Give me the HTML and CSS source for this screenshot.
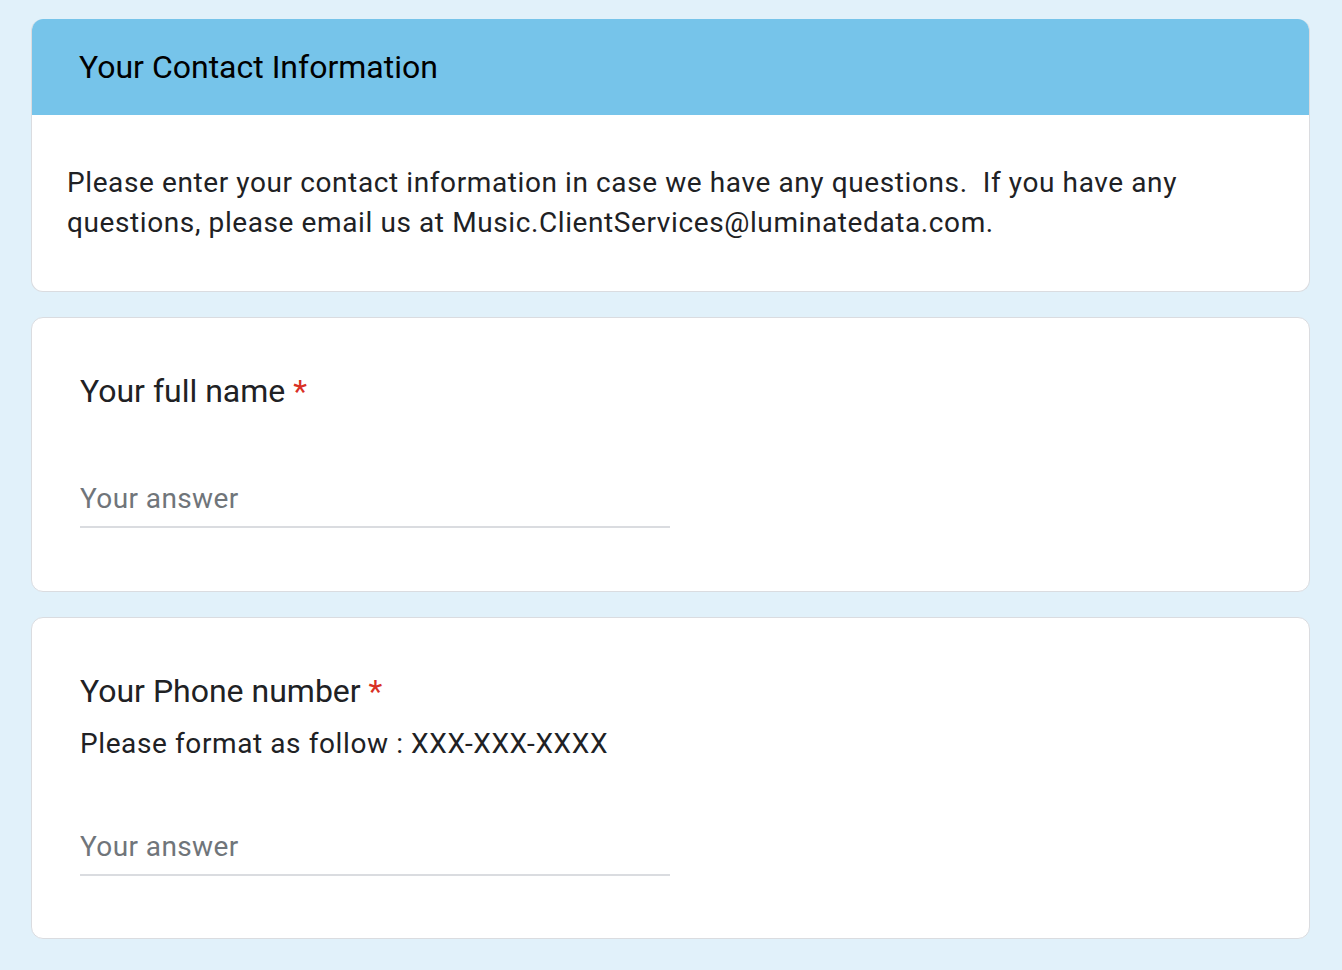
FILE: index.html
```html
<!DOCTYPE html>
<html lang="en">
<head>
  <meta charset="UTF-8">
  <title>Your Contact Information</title>
  <meta name="viewport" content="width=device-width, initial-scale=1.0">
  <link rel="stylesheet" href="styles.css">
</head>
<body>

<main class="form">

  <section class="card section-card">
    <header class="section-head">
      <h2>Your Contact Information</h2>
    </header>
    <div class="section-desc">
      Please enter your contact information in case we have any questions.&nbsp; If you have any questions, please email us at Music.ClientServices@luminatedata.com.
    </div>
  </section>

  <section class="card question q-name">
    <div class="q-title">Your full name <span class="req">*</span></div>
    <input class="answer" type="text" placeholder="Your answer">
  </section>

  <section class="card question q-phone">
    <div class="q-title">Your Phone number <span class="req">*</span></div>
    <div class="q-help">Please format as follow : XXX-XXX-XXXX</div>
    <input class="answer" type="text" placeholder="Your answer">
  </section>

</main>

</body>
</html>
```

FILE: styles.css
```css
* { box-sizing: border-box; }
body {
  margin: 0; background: #e1f1fa; color: #202124;
  font-family: Roboto, "Noto Sans", sans-serif;
}
.form { padding: 19px 32px 0 31px; display: flex; flex-direction: column; gap: 25px; }
.card {
  background: #fff; border: 1px solid #dadce0; border-radius: 12px; overflow: hidden;
}
.section-card { border-top: none; }
.section-head { background: #76c4ea; height: 96px; padding: 0 47px; display: flex; align-items: center; }
.section-head h2 { margin: 0; font-size: 32px; font-weight: 400; color: #000; }
.section-desc { padding: 48px 34px 48px 35px; font-size: 28px; letter-spacing: 0.6px; line-height: 40px; }

.question { padding: 51px 48px 0; }
.q-name { height: 275px; }
.q-phone { height: 322px; }
.q-title { font-size: 32px; line-height: 44px; }
.req { color: #d93025; }
.q-help { font-size: 28px; letter-spacing: 0.6px; line-height: 40px; margin-top: 11px; }
.answer {
  display: block; width: 590px; margin-top: 69px;
  border: none; border-bottom: 2px solid #dadce0; outline: none;
  font-family: inherit; font-size: 28px; letter-spacing: 0.4px; line-height: 34px;
  padding: 0 0 10px; color: #202124; background: transparent;
}
.q-help + .answer { margin-top: 66px; }
.answer::placeholder { color: #70757a; }
```
